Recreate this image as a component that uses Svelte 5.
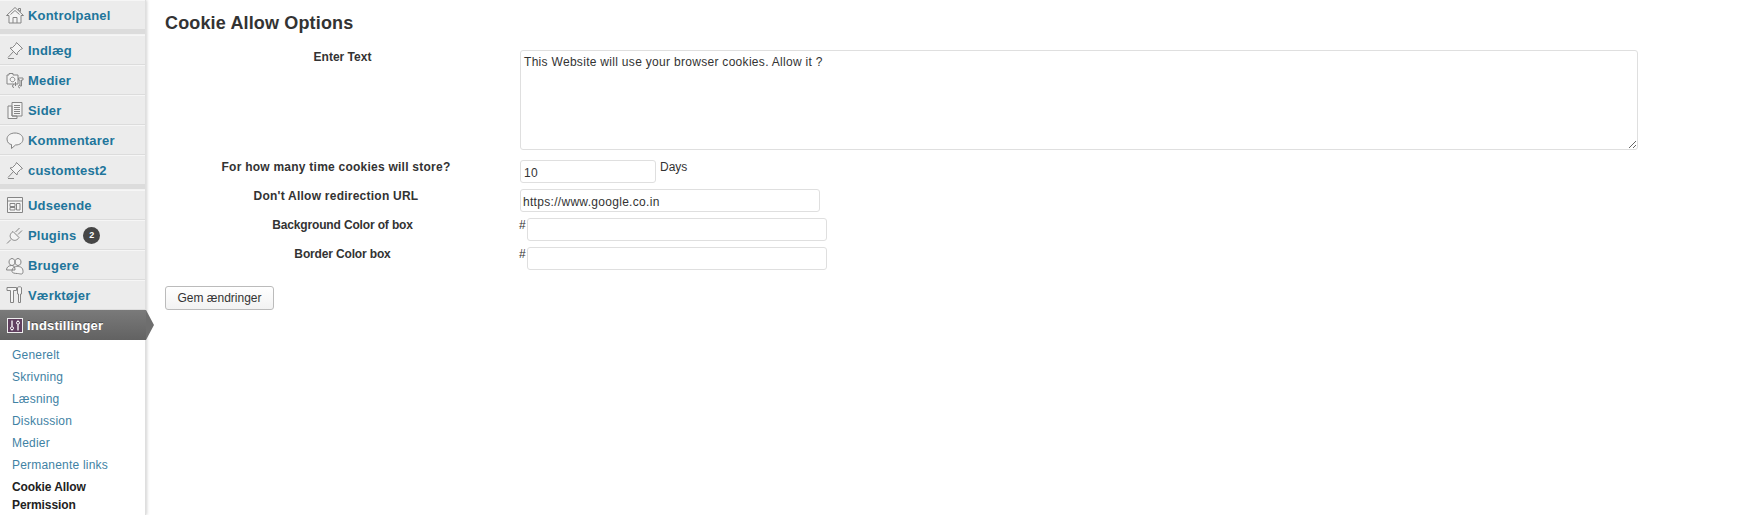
<script lang="ts">
  type Item = { label: string; icon: string; badge?: number; current?: boolean };

  const TOP: Item[][] = [
    [{ label: 'Kontrolpanel', icon: 'home' }],
    [
      { label: 'Indlæg', icon: 'pin' },
      { label: 'Medier', icon: 'media' },
      { label: 'Sider', icon: 'pages' },
      { label: 'Kommentarer', icon: 'comment' },
      { label: 'customtest2', icon: 'pin' },
    ],
    [
      { label: 'Udseende', icon: 'appearance' },
      { label: 'Plugins', icon: 'plug', badge: 2 },
      { label: 'Brugere', icon: 'users' },
      { label: 'Værktøjer', icon: 'tools' },
      { label: 'Indstillinger', icon: 'settings', current: true },
    ],
  ];

  const SUB = ['Generelt', 'Skrivning', 'Læsning', 'Diskussion', 'Medier', 'Permanente links'];

  // each icon: filled outline shapes first, thin detail strokes second
  const ICONS: Record<string, { body: string; detail: string }> = {
    home: {
      body: 'M1.5 10.5 10 2.5 18.5 10.5H16V18H4V10.5ZM13.5 3.5H15.5V6.5L13.5 5Z',
      detail: 'M8 18V12.5H12V18M5.5 9.5 10 5.5 14.5 9.5',
    },
    pin: {
      body: 'M11.5 2.5 17.5 8.5 15.5 9.5 12.5 12.5 12 15 5 8 7.5 7.5 10.5 4.5Z',
      detail: 'M8.5 11.5 3 17.5M3 18.5H9',
    },
    media: {
      body: 'M2 5H4V3.5H8V5H13V14H2ZM13.5 8H18V10H16.5V16H15V10H13.5Z',
      detail: 'M7.5 7.2a2.3 2.3 0 1 0 .01 0M9 14.5a1.5 1.5 0 1 0 .01 3M15 15a1.5 1.5 0 1 0 .01 3M10.5 16V12',
    },
    pages: {
      body: 'M3 6H7V16H12V18.5H3ZM7 2.5H17V16H7Z',
      detail: 'M9 5.5H15M9 7.5H15M9 9.5H15M9 11.5H15M9 13.5H15',
    },
    comment: {
      body: 'M10 3C5.5 3 2 5.5 2 9S4.5 14.5 6.5 14.5V18.5L10.5 15C15 15 18 12.5 18 9S14.5 3 10 3Z',
      detail: '',
    },
    appearance: {
      body: 'M2.5 2.5H17.5V17.5H2.5Z',
      detail: 'M2.5 6H17.5M5 8.5H10V11.5H5ZM5 12.5H10V15H5ZM11.5 8.5H15V15H11.5Z',
    },
    plug: {
      body: 'M8 6.5 14 12.5C12 16 8.5 16 6.5 14S4.5 9 8 6.5Z',
      detail: 'M6 14.5 2 18.5M10.5 7 14.5 3M13 9.5 17 5.5',
    },
    users: {
      body: 'M7 3.5a3 3.5 0 1 0 .01 0ZM1.5 15C1.5 12 4 10.5 6.5 10.5S10 12 10 15ZM13 3.5a3 3.5 0 1 0 .01 0ZM7 16.5C7 12.5 9.5 11.5 12.5 11.5S18 12.5 18 16.5 15 18.5 12.5 18.5 7 18 7 16.5Z',
      detail: '',
    },
    tools: {
      body: 'M2 2.5H11.5V5.5H8.5V17.5H5.5V5.5H2ZM12.5 2.5C13.5 1.5 15.5 1.5 16.5 2.5V9H15.5V17.5H13.5V9H12.5Z',
      detail: '',
    },
  };
</script>

<div class="page">
  <nav class="side">
    {#each TOP as group, g}
      {#if g > 0}<div class="sep"></div>{/if}
      {#each group as it}
        <a class="top" class:current={it.current} href="#x">
          {#if it.icon === 'settings'}
            <span class="settings-ico">
              <svg viewBox="0 0 14 13" width="14" height="13">
                <path d="M4 1.5V7.5M10 5.5V11.5M4 11.5V10.8M10 2V1.5" fill="none" stroke="#fff" stroke-width="1.3" />
                <circle cx="4" cy="9.2" r="1.5" fill="none" stroke="#fff" stroke-width="1" />
                <circle cx="10" cy="3.8" r="1.5" fill="none" stroke="#fff" stroke-width="1" />
              </svg>
            </span>
          {:else}
            <svg class="ico" viewBox="0 0 20 20" width="20" height="20">
              <path d={ICONS[it.icon].body} fill="#f4f4f4" stroke="#858585" stroke-width="1" stroke-linejoin="round" />
              <path d={ICONS[it.icon].detail} fill="none" stroke="#858585" stroke-width="1" />
            </svg>
          {/if}
          <span>{it.label}</span>
          {#if it.badge}<span class="badge">{it.badge}</span>{/if}
        </a>
      {/each}
    {/each}
    <ul class="sub">
      {#each SUB as s}
        <li><a href="#x">{s}</a></li>
      {/each}
      <li class="on"><a href="#x">Cookie Allow Permission</a></li>
    </ul>
  </nav>

  <main class="content">
    <h2>Cookie Allow Options</h2>
    <form class="form">
      <div class="lbl">Enter Text</div>
      <div class="field"><textarea>This Website will use your browser cookies. Allow it ?</textarea></div>

      <div class="lbl wide">For how many time cookies will store?</div>
      <div class="field"><input class="days" value="10" /><span class="unit">Days</span></div>

      <div class="lbl wide">Don't Allow redirection URL</div>
      <div class="field"><input class="url" value="https://www.google.co.in" /></div>

      <div class="lbl tight">Background Color of box</div>
      <div class="field"><span class="hash">#</span><input class="color" /></div>

      <div class="lbl tight">Border Color box</div>
      <div class="field"><span class="hash">#</span><input class="color" /></div>
    </form>
    <button type="button" class="save">Gem ændringer</button>
  </main>
</div>

<style>
  :global(body) {
    margin: 0;
    background: #fff;
    font-family: "Liberation Sans", Arial, sans-serif;
    font-size: 12px;
    color: #333;
  }
  .page {
    display: flex;
    height: 515px;
    overflow: hidden;
  }
  .side {
    flex: none;
    width: 145px;
    border-right: 1px solid #dfdfdf;
    box-shadow: 1px 0 3px rgba(0, 0, 0, 0.18);
    background: #fff;
  }
  .top {
    position: relative;
    display: flex;
    align-items: center;
    height: 30px;
    box-sizing: border-box;
    padding-left: 5px;
    gap: 3px;
    background: #ececec;
    border-top: 1px solid #f6f6f6;
    border-bottom: 1px solid #dcdcdc;
    font-size: 13px;
    font-weight: bold;
    letter-spacing: 0.2px;
    color: #21759b;
    text-decoration: none;
  }
  .ico { flex: none; }
  .sep {
    height: 5px;
    background: #dcdcdc;
    border-bottom: 1px solid #f2f2f2;
    box-sizing: border-box;
  }
  .badge {
    margin-left: 4px;
    width: 17px;
    height: 17px;
    border-radius: 50%;
    background: #464646;
    color: #fff;
    font-size: 9px;
    line-height: 17px;
    text-align: center;
  }
  .top.current {
    background: linear-gradient(#7a7a7a, #626262);
    border: none;
    margin-right: -1px;
    color: #fff;
    text-shadow: 0 -1px 0 rgba(0, 0, 0, 0.4);
    padding-left: 7px;
    gap: 4px;
  }
  .top.current::after {
    content: '';
    position: absolute;
    left: 100%;
    top: 0;
    border-left: 8px solid #6e6e6e;
    border-top: 15px solid transparent;
    border-bottom: 15px solid transparent;
  }
  .settings-ico {
    display: flex;
    align-items: center;
    justify-content: center;
    width: 14px;
    height: 13px;
    background: #60405f;
    border: 1px solid #eee;
  }
  .sub {
    list-style: none;
    margin: 0;
    padding: 6px 0 0 12px;
  }
  .sub li { line-height: 18px; margin-bottom: 4px; letter-spacing: 0.2px; }
  .sub a { color: #3f82a4; text-decoration: none; }
  .sub li.on { margin: 0; width: 90px; letter-spacing: -0.1px; }
  .sub li.on a { color: #222; font-weight: bold; }
  .content {
    flex: 1;
    padding-left: 19px;
    padding-top: 13px;
    min-width: 0;
  }
  h2 {
    margin: 0 0 17px;
    font-size: 18px;
    line-height: 20px;
    font-weight: bold;
    letter-spacing: 0.15px;
    color: #333;
  }
  .form {
    display: grid;
    grid-template-columns: 355px 1fr;
    row-gap: 6px;
    align-items: start;
  }
  .lbl {
    font-weight: bold;
    text-align: center;
    line-height: 14px;
  }
  .lbl.wide { letter-spacing: 0.24px; padding-right: 13px; }
  .lbl.tight { letter-spacing: -0.15px; }
  .field {
    display: flex;
    align-items: flex-start;
  }
  textarea, input {
    box-sizing: border-box;
    border: 1px solid #dfdfdf;
    border-radius: 3px;
    background: #fff;
    font: 12px "Liberation Sans", Arial, sans-serif;
    letter-spacing: 0.3px;
    color: #333;
    margin: 0;
    outline: none;
  }
  textarea {
    width: 1118px;
    height: 100px;
    padding: 4px 3px;
    margin-bottom: 4px;
    display: block;
  }
  input {
    height: 23px;
    padding: 4px 3px 2px;
  }
  .days { width: 136px; }
  .url { width: 300px; padding-left: 2px; }
  .color { width: 300px; }
  .unit { margin-left: 4px; line-height: 14px; }
  .hash { width: 8px; line-height: 14px; margin-left: -1px; }
  .save {
    display: block;
    margin-top: 16px;
    width: 109px;
    height: 24px;
    border: 1px solid #bbb;
    border-radius: 3px;
    background: linear-gradient(#fff, #f2f2f2);
    font: 12px "Liberation Sans", Arial, sans-serif;
    color: #333;
    padding: 0;
  }
</style>
